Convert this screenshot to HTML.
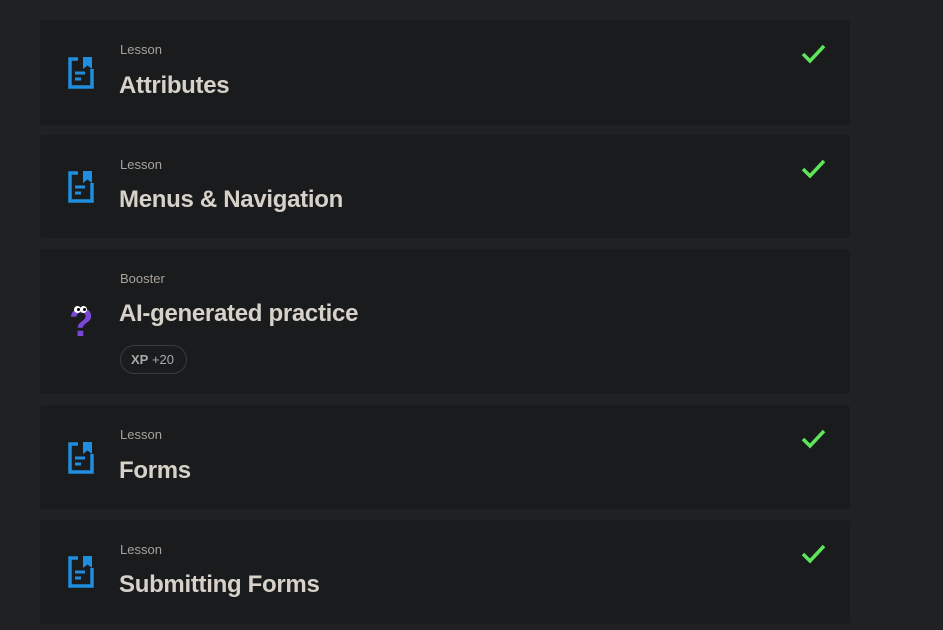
<!DOCTYPE html><html><head><style>
body{margin:0;width:943px;height:630px;background:#202123;font-family:"Liberation Sans",sans-serif;overflow:hidden;position:relative}
.c{position:absolute;left:40px;width:810px;background:#1a1b1d;border-radius:4px}
.l{position:absolute;left:80px;font-size:13px;color:#a7a29b}
.t{position:absolute;left:79px;font-size:24px;font-weight:bold;color:#d6d1c9;letter-spacing:-0.3px}
.i{position:absolute;left:27px}
.k{position:absolute;left:760px}
.xp{position:absolute;left:80px;top:96px;width:67px;height:29px;border:1px solid #3a3b3d;border-radius:15px;font-size:13px;color:#aaa;box-sizing:border-box;line-height:27px;padding-left:10px}
</style></head><body>
<svg width="0" height="0" style="position:absolute"><defs>
<g id="doc"><path d="M11 3H3v28h22V13" fill="none" stroke="#1f8ee0" stroke-width="3.5"/><path d="M16 1h9v12l-4.5-3.5L16 13z" fill="#1f8ee0"/><path d="M8 17h10M8 23h6" stroke="#1f8ee0" stroke-width="3"/></g>
<g id="ck"><path d="M3 12l7 7L24 4" fill="none" stroke="#5ee65a" stroke-width="3.5"/></g>
</defs></svg>
<div class="c" style="top:20px;height:105px"><div class="l" style="top:22px">Lesson</div><div class="t" style="top:52px">Attributes</div><svg class="i" style="top:36px" width="28" height="34"><use href="#doc"/></svg><svg class="k" style="top:22px" width="28" height="24"><use href="#ck"/></svg></div>
<div class="c" style="top:135px;height:103px"><div class="l" style="top:22px">Lesson</div><div class="t" style="top:51px">Menus &amp; Navigation</div><svg class="i" style="top:35px" width="28" height="34"><use href="#doc"/></svg><svg class="k" style="top:22px" width="28" height="24"><use href="#ck"/></svg></div>
<div class="c" style="top:249px;height:145px"><div class="l" style="top:22px">Booster</div><div class="t" style="top:51px">AI-generated practice</div>
<div style="position:absolute;top:50px;left:29px;font-size:40px;font-weight:bold;color:#7a48d8;line-height:48px">?</div>
<div style="position:absolute;left:34px;top:57px;width:7px;height:7px;background:#fff;border-radius:50%;box-shadow:6px 0 0 #fff"></div>
<div style="position:absolute;left:37px;top:59px;width:3px;height:3px;background:#000;border-radius:50%;box-shadow:6px 0 0 #000"></div>
<div class="xp"><b>XP</b> +20</div></div>
<div class="c" style="top:405px;height:104px"><div class="l" style="top:22px">Lesson</div><div class="t" style="top:52px">Forms</div><svg class="i" style="top:36px" width="28" height="34"><use href="#doc"/></svg><svg class="k" style="top:22px" width="28" height="24"><use href="#ck"/></svg></div>
<div class="c" style="top:520px;height:104px"><div class="l" style="top:22px">Lesson</div><div class="t" style="top:51px">Submitting Forms</div><svg class="i" style="top:35px" width="28" height="34"><use href="#doc"/></svg><svg class="k" style="top:22px" width="28" height="24"><use href="#ck"/></svg></div>
</body></html>
